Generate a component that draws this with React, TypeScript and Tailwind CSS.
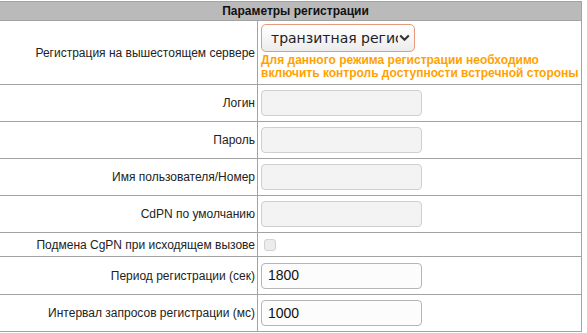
import React from "react";

const B = "border-[#a3a3a3]";

function Label({ children }: { children: React.ReactNode }) {
  return (
    <div className="w-[258px] shrink-0 border-r border-[#a3a3a3] flex items-center justify-end pr-[2px] text-[12px] text-[#222]">
      {children}
    </div>
  );
}

function DisabledInput() {
  return (
    <div className="w-[161px] h-[26px] rounded-[4px] border border-[#cfcfcf] bg-[#f3f3f3]" />
  );
}

function TextInput({ value }: { value: string }) {
  return (
    <div className="w-[161px] h-[26px] rounded-[4px] border border-[#b5b5b5] bg-[#fcfcfc] flex items-center pl-[6px] text-[14px] text-[#111]">
      {value}
    </div>
  );
}

export default function App() {
  return (
    <div className="bg-white w-[587px] h-[333px] overflow-hidden" style={{ fontFamily: '"Liberation Sans", Arial, sans-serif' }}>
      <div className={`mt-[1px] w-[582px] border-t border-r ${B}`}>
        <div className={`h-[19px] bg-[#bababa] border-b ${B} flex items-center justify-center text-[12px] font-bold text-[#111] pl-[10px]`}>
          Параметры регистрации
        </div>
        <div className={`h-[64px] flex border-b ${B}`}>
          <Label>Регистрация на вышестоящем сервере</Label>
          <div className="pl-[3px] pt-[3px] flex flex-col">
            <div className="w-[154px] h-[28px] rounded-[5px] border border-[#e39a7c] bg-gradient-to-b from-white to-[#ececec] flex items-center pl-[9px] pr-[6px] text-[14px] text-[#222]" style={{ fontFamily: '"DejaVu Sans", sans-serif' }}>
              <span className="overflow-hidden whitespace-nowrap w-[127px] shrink-0">транзитная регистрация</span>
              <svg width="11" height="8" viewBox="0 0 11 8" className="shrink-0 ml-[1px]">
                <path d="M1.2 1.5 L5.5 5.8 L9.8 1.5" stroke="#333" strokeWidth="2" fill="none" />
              </svg>
            </div>
            <div className="mt-[2px] text-[12px] font-bold leading-[13px] text-[#ffa200]">
              Для данного режима регистрации необходимо
              <br />
              включить контроль доступности встречной стороны
            </div>
          </div>
        </div>
        {["Логин", "Пароль", "Имя пользователя/Номер", "CdPN по умолчанию"].map((l) => (
          <div key={l} className={`h-[37px] flex border-b ${B}`}>
            <Label>{l}</Label>
            <div className="pl-[3px] flex items-center">
              <DisabledInput />
            </div>
          </div>
        ))}
        <div className={`h-[24px] flex border-b ${B}`}>
          <Label>Подмена CgPN при исходящем вызове</Label>
          <div className="pl-[6px] flex items-center">
            <div className="w-[12px] h-[12px] rounded-[3px] border border-[#d2d2d2] bg-[#ececec]" />
          </div>
        </div>
        <div className={`h-[38px] flex border-b ${B}`}>
          <Label>Период регистрации (сек)</Label>
          <div className="pl-[3px] flex items-center">
            <TextInput value="1800" />
          </div>
        </div>
        <div className={`h-[37px] flex border-b ${B}`}>
          <Label>Интервал запросов регистрации (мс)</Label>
          <div className="pl-[3px] flex items-center">
            <TextInput value="1000" />
          </div>
        </div>
      </div>
    </div>
  );
}
